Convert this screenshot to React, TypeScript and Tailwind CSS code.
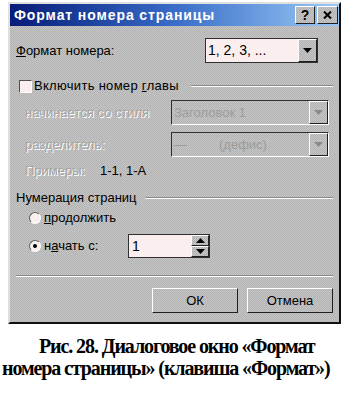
import React from "react";

const dither =
  "bg-[repeating-conic-gradient(#c6c6c6_0_25%,#b2b2b2_0_50%)] bg-[length:2px_2px]";

function Arrow({ disabled }: { disabled?: boolean }) {
  return (
    <svg width="9" height="5" viewBox="0 0 9 5">
      <path d="M0 0h9L4.5 5z" fill={disabled ? "#8a8a8a" : "#000"} />
    </svg>
  );
}

function Raised({ className, children }: { className?: string; children?: React.ReactNode }) {
  return (
    <div
      className={`flex items-center justify-center border border-t-white border-l-white border-b-[#202020] border-r-[#202020] ${dither} ${className ?? ""}`}
    >
      {children}
    </div>
  );
}

function Combo({ text, disabled, className }: { text: React.ReactNode; disabled?: boolean; className: string }) {
  return (
    <div
      className={`flex h-[25px] border border-t-[#303030] border-l-[#303030] ${
        disabled ? "border-b-white border-r-white" : "border-b-[#303030] border-r-[#303030] bg-[#fbeeee]"
      } ${className}`}
    >
      <div className={`flex flex-1 items-center pl-[2px] ${disabled ? "text-[#9c9c9c]" : "text-black"}`}>{text}</div>
      <Raised className="h-full w-[19px]">
        <Arrow disabled={disabled} />
      </Raised>
    </div>
  );
}

function Label({ children, className }: { children: React.ReactNode; className?: string }) {
  return <span className={`text-[13px] leading-4 ${className ?? ""}`}>{children}</span>;
}

export default function App() {
  return (
    <div className="h-[398px] w-[364px] bg-white font-['Liberation_Sans',Arial,sans-serif]">
      <div className="pt-[2px] pl-[8px]">
        <div
          className={`flex h-[322px] w-[333px] flex-col border-2 border-t-[#e0e0e0] border-l-[#e0e0e0] border-b-[#101010] border-r-[#101010] ${dither}`}
        >
          {/* title bar */}
          <div className="flex h-[22px] items-center bg-gradient-to-r from-[#0a1a78] via-[#3a6cc8] to-[#9ccaf4] pl-[4px] pr-[1px]">
            <span className="flex-1 text-[14px] font-bold tracking-[0.9px] text-white">Формат номера страницы</span>
            <Raised className="h-[18px] w-[20px] text-[14px] font-bold text-black">?</Raised>
            <Raised className="ml-[2px] h-[18px] w-[21px]">
              <svg width="9" height="8" viewBox="0 0 9 8">
                <path d="M1 0.5l7 7M8 0.5l-7 7" stroke="#000" strokeWidth="2" />
              </svg>
            </Raised>
          </div>

          <div className="flex flex-col pl-[6px] pr-[6px] text-black">
            {/* format */}
            <div className="mt-[12px] flex h-[25px] items-center">
              <Label className="w-[189px]">
                <u>Ф</u>ормат номера:
              </Label>
              <Combo text={<span className="text-[14px]">1, 2, 3, ...</span>} className="w-[113px]" />
            </div>

            {/* include chapter */}
            <div className="mt-[15px] flex h-[16px] items-center pl-[3px]">
              <div className="h-[13px] w-[13px] border border-t-[#505050] border-l-[#505050] border-b-white border-r-white bg-[#fbeeee]" />
              <Label className="ml-[2px] tracking-[0.3px]">
                Включить номер <u>г</u>лавы
              </Label>
              <div className="ml-[12px] h-[2px] flex-1 border-t border-b border-t-[#8a8a8a] border-b-white" />
            </div>

            <div className="mt-[6px] flex h-[25px] items-center pl-[9px]">
              <Label className="w-[146px] text-[#a4a4a4] [text-shadow:1px_1px_0_#fff]">начинается со стиля</Label>
              <Combo text={<Label>Заголовок 1</Label>} disabled className="w-[158px]" />
            </div>

            <div className="mt-[7px] flex h-[25px] items-center pl-[9px]">
              <Label className="w-[146px] text-[#a4a4a4] [text-shadow:1px_1px_0_#fff]">разделитель:</Label>
              <Combo
                text={
                  <span className="flex items-center">
                    <Label className="text-[#9c9c9c]">—</Label>
                    <Label className="ml-[32px]">(дефис)</Label>
                  </span>
                }
                disabled
                className="w-[158px]"
              />
            </div>

            <div className="mt-[6px] flex h-[16px] items-center pl-[9px]">
              <Label className="w-[75px] text-[#a4a4a4] [text-shadow:1px_1px_0_#fff]">Примеры:</Label>
              <Label>1-1, 1-A</Label>
            </div>

            {/* numbering */}
            <div className="mt-[11px] flex h-[16px] items-center">
              <Label>Нумерация страниц</Label>
              <div className="ml-[8px] h-[2px] flex-1 border-t border-b border-t-[#8a8a8a] border-b-white" />
            </div>

            <div className="mt-[4px] flex h-[16px] items-center pl-[13px]">
              <div className="h-[12px] w-[12px] rounded-full border border-t-[#606060] border-l-[#606060] border-b-white border-r-white bg-[#fbeeee]" />
              <Label className="ml-[3px]">
                <u>п</u>родолжить
              </Label>
            </div>

            <div className="mt-[8px] flex h-[24px] items-center pl-[13px]">
              <div className="flex h-[12px] w-[12px] items-center justify-center rounded-full border border-t-[#606060] border-l-[#606060] border-b-white border-r-white bg-[#fbeeee]">
                <div className="h-[4px] w-[4px] rounded-full bg-black" />
              </div>
              <Label className="ml-[3px] w-[84px]">
                н<u>а</u>чать с:
              </Label>
              <div className="flex h-[24px] w-[82px] border border-[#303030] bg-[#fbeeee]">
                <div className="flex flex-1 items-center pl-[3px] text-[14px]">1</div>
                <div className="flex w-[18px] flex-col">
                  <Raised className="flex-1">
                    <svg width="9" height="5" viewBox="0 0 9 5">
                      <path d="M0 5h9L4.5 0z" fill="#000" />
                    </svg>
                  </Raised>
                  <Raised className="flex-1">
                    <Arrow />
                  </Raised>
                </div>
              </div>
            </div>

            {/* separator */}
            <div className="mt-[17px] h-[2px] border-t border-b border-t-[#8a8a8a] border-b-white" />

            {/* buttons */}
            <div className="mt-[11px] flex justify-end gap-[9px]">
              <Raised className="h-[25px] w-[86px] text-[13px]">ОК</Raised>
              <Raised className="h-[25px] w-[86px] text-[13px]">Отмена</Raised>
            </div>
          </div>
        </div>
      </div>

      {/* caption */}
      <div className="mt-[11px] font-['Liberation_Serif'] text-[20px] font-bold leading-[22px] tracking-[-1.1px] text-black">
        <div className="pl-[39px] whitespace-nowrap">Рис. 28. Диалоговое окно «Формат</div>
        <div className="pl-[2px] whitespace-nowrap">номера страницы» (клавиша «Формат»)</div>
      </div>
    </div>
  );
}
